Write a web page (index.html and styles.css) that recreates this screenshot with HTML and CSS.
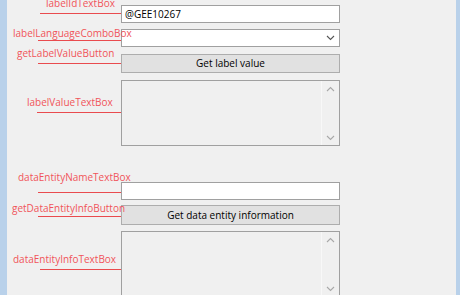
FILE: index.html
```html
<!DOCTYPE html>
<html lang="en">
<head>
    <meta charset="UTF-8">
    <meta name="viewport" content="width=device-width, initial-scale=1.0">
    <title>Label lookup form</title>
    <link rel="stylesheet" href="styles.css">
</head>
<body>

<div class="window">
    <div class="frame-edge left"></div>

    <div class="client">
        <div class="form">

            <div class="row row-id">
                <div class="callout"><span>labelIdTextBox</span><i></i></div>
                <div class="textbox">@GEE10267</div>
            </div>

            <div class="row row-lang">
                <div class="callout"><span>labelLanguageComboBox</span><i></i></div>
                <div class="textbox combo">
                    <svg width="9" height="6" viewBox="0 0 9 6"><path d="M1 1 L4.5 4.5 L8 1" fill="none" stroke="#555" stroke-width="1.1"/></svg>
                </div>
            </div>

            <div class="row row-getlabel">
                <div class="callout"><span>getLabelValueButton</span><i></i></div>
                <div class="button">Get label value</div>
            </div>

            <div class="row row-value">
                <div class="callout"><span>labelValueTextBox</span><i></i></div>
                <div class="memo">
                    <div class="memo-text"></div>
                    <div class="scrollbar">
                        <svg width="9" height="6" viewBox="0 0 9 6"><path d="M1 5 L4.5 1.5 L8 5" fill="none" stroke="#a8a8a8" stroke-width="1.1"/></svg>
                        <svg width="9" height="6" viewBox="0 0 9 6"><path d="M1 1 L4.5 4.5 L8 1" fill="none" stroke="#a8a8a8" stroke-width="1.1"/></svg>
                    </div>
                </div>
            </div>

            <div class="row row-name">
                <div class="callout"><span>dataEntityNameTextBox</span><i></i></div>
                <div class="textbox"></div>
            </div>

            <div class="row row-getinfo">
                <div class="callout"><span>getDataEntityInfoButton</span><i></i></div>
                <div class="button">Get data entity information</div>
            </div>

            <div class="row row-info">
                <div class="callout"><span>dataEntityInfoTextBox</span><i></i></div>
                <div class="memo">
                    <div class="memo-text"></div>
                    <div class="scrollbar">
                        <svg width="9" height="6" viewBox="0 0 9 6"><path d="M1 5 L4.5 1.5 L8 5" fill="none" stroke="#a8a8a8" stroke-width="1.1"/></svg>
                        <svg width="9" height="6" viewBox="0 0 9 6"><path d="M1 1 L4.5 4.5 L8 1" fill="none" stroke="#a8a8a8" stroke-width="1.1"/></svg>
                    </div>
                </div>
            </div>

        </div>
    </div>

    <div class="frame-edge right"></div>
</div>

</body>
</html>
```

FILE: styles.css
```css
body {
    margin: 0;
    background-color: #f0f0f0;
    font-family: "Open Sans", "Noto Sans", sans-serif;
    overflow: hidden;
}

.window {
    display: flex;
    width: 460px;
    height: 295px;
    overflow: hidden;
}

.frame-edge {
    background-color: #b9d1ea;
    flex: none;
}

.frame-edge.left {
    width: 7px;
}

.frame-edge.right {
    width: 4px;
}

.client {
    flex: 1;
    background-color: #f0f0f0;
}

.form {
    display: flex;
    flex-direction: column;
    width: 219px;
    margin-left: 114px; /* controls start at x = 121 */
    padding-top: 5px;
}

.row {
    position: relative;
    display: flex;
}

/* red annotation: name of the control with a lead line */
.callout {
    position: absolute;
    right: 100%;
    top: var(--top);
    width: var(--w);
    display: flex;
    flex-direction: column;
}

.callout span {
    display: block;
    margin-left: var(--tx);
    font-size: 10px;
    line-height: 10px;
    white-space: nowrap;
    color: #f0545a;
}

.callout i {
    display: block;
    height: 1px;
    margin-top: var(--gap);
    background-color: #e94b4e;
}

.row-id      { margin-top: 0; }
.row-lang    { margin-top: 6px; }
.row-getlabel{ margin-top: 7px; }
.row-value   { margin-top: 7px; }
.row-name    { margin-top: 36px; }
.row-getinfo { margin-top: 5px; }
.row-info    { margin-top: 6px; }

.row-id .callout       { --top: -7px;  --w: 81px; --tx: 6px;   --gap: 5px; }
.row-lang .callout     { --top: -1px;  --w: 83px; --tx: -25px; --gap: 2px; }
.row-getlabel .callout { --top: -6px;  --w: 83px; --tx: -21px; --gap: 5px; }
.row-value .callout    { --top: 17px;  --w: 84px; --tx: -10px; --gap: 5px; }
.row-name .callout     { --top: -10px; --w: 83px; --tx: -20px; --gap: 10px; }
.row-getinfo .callout  { --top: -2px;  --w: 83px; --tx: -26px; --gap: 3px; }
.row-info .callout     { --top: 23px;  --w: 81px; --tx: -27px; --gap: 5px; }

.textbox {
    flex: 1;
    height: 18px;
    box-sizing: border-box;
    border: 1px solid #a0a0a0;
    background-color: #fff;
    font-size: 10px;
    line-height: 16px;
    padding-left: 3px;
    color: #000;
}

.combo {
    display: flex;
    justify-content: flex-end;
    align-items: center;
    padding-right: 4px;
}

.button {
    flex: 1;
    height: 19px;
    box-sizing: border-box;
    border: 1px solid #adadad;
    background-color: #e1e1e1;
    font-size: 10px;
    line-height: 17px;
    text-align: center;
    color: #000;
}

.row-getinfo .button {
    height: 20px;
    line-height: 18px;
}

.memo {
    flex: 1;
    height: 66px;
    box-sizing: border-box;
    border: 1px solid #a0a0a0;
    background-color: #f0f0f0;
    display: flex;
}

.memo-text {
    flex: 1;
}

.scrollbar {
    width: 17px;
    border-left: 1px solid #f8f8f8;
    display: flex;
    flex-direction: column;
    justify-content: space-between;
    align-items: center;
    padding: 5px 0 4px;
}
```
